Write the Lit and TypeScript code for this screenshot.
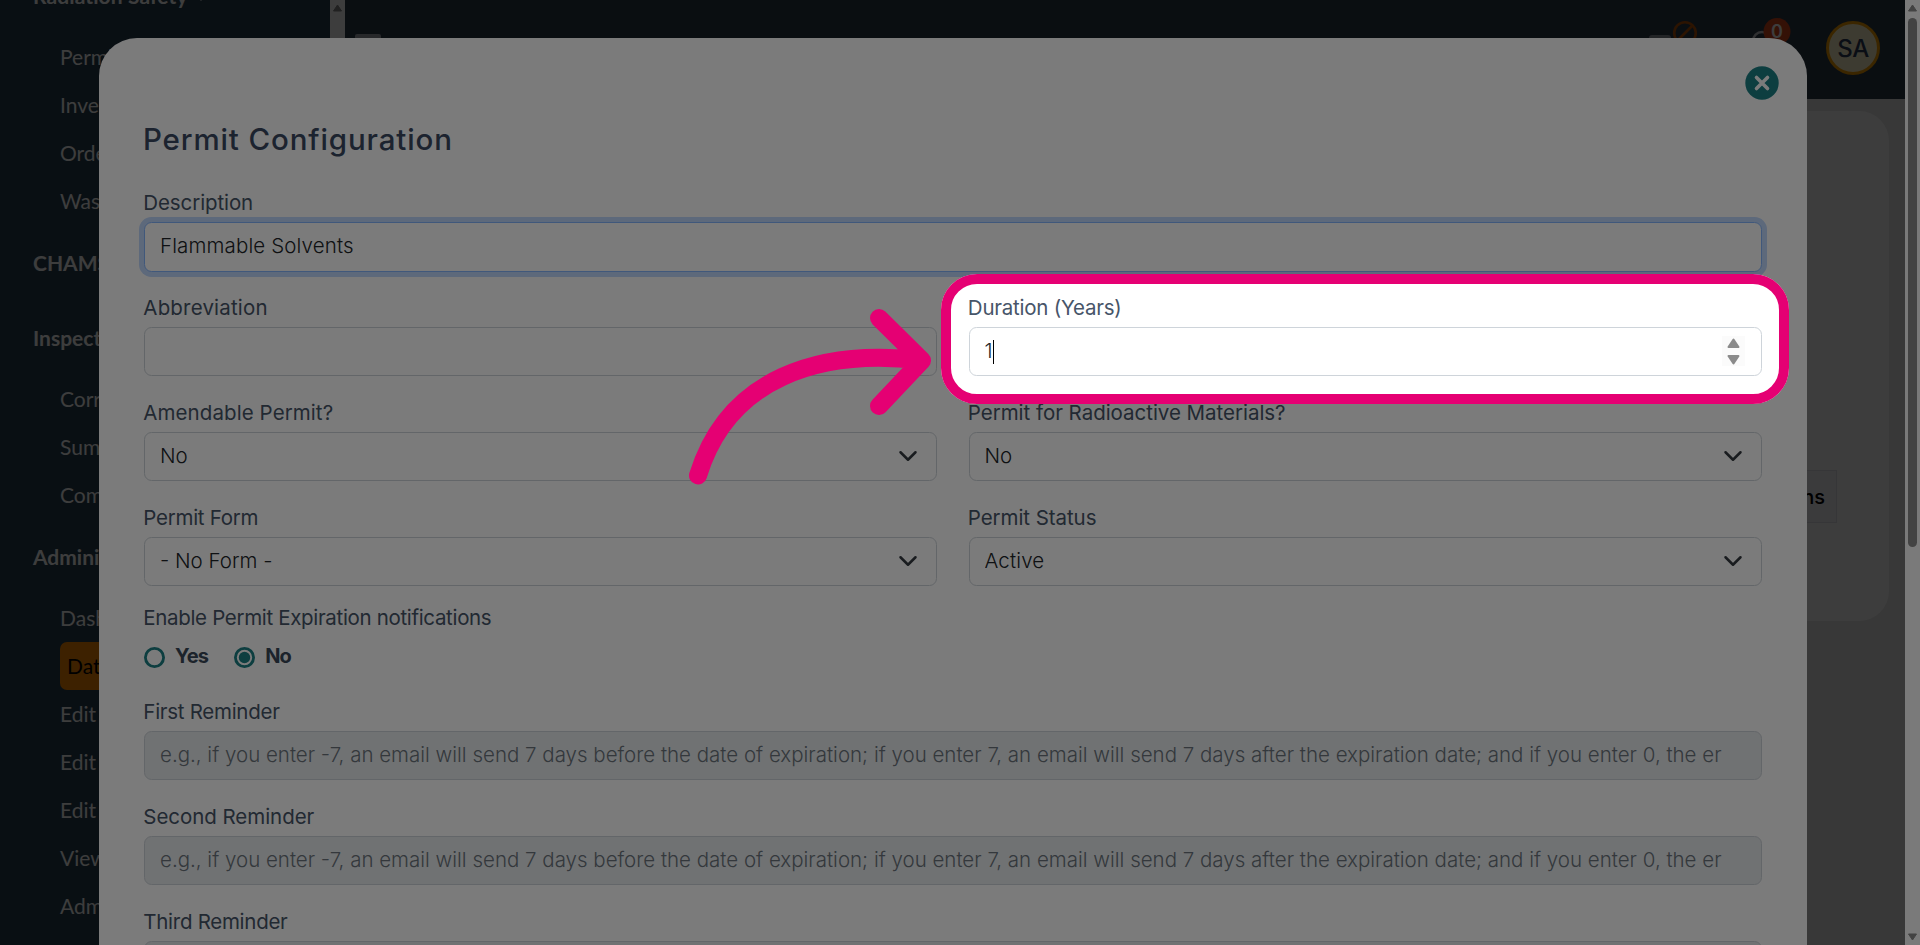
import { LitElement, html, css, svg } from "lit";
import { customElement, property } from "lit/decorators.js";
import { classMap } from "lit/directives/class-map.js";

const REMINDER_HINT =
  "e.g., if you enter -7, an email will send 7 days before the date of expiration; if you enter 7, an email will send 7 days after the expiration date; and if you enter 0, the er";

const chevron = html`<svg class="chevron" width="20" height="20" viewBox="0 0 16 16" fill="none" stroke="#343a40" stroke-width="2" stroke-linecap="round" stroke-linejoin="round"><path d="m2 5 6 6 6-6" /></svg>`;

const sections: { title: string; items: string[]; open?: boolean }[] = [
  { title: "Radiation Safety", items: ["Permits", "Inventory", "Orders", "Waste"], open: true },
  { title: "CHAMS", items: [] },
  { title: "Inspections", items: ["Corrections", "Summary", "Compliance"] },
  { title: "Administration", items: ["Dashboard", "Data", "Edit", "Edit", "Edit", "View", "Admin"] },
];

@customElement("side-nav")
export class SideNav extends LitElement {
  static styles = css`
    :host { display: block; width: 330px; height: 945px; overflow: hidden; background: #263f50; font: 21px/48px Lato, sans-serif; color: #fff; }
    .list { margin-top: -42px; display: flex; flex-direction: column; }
    .section { display: flex; flex-direction: column; }
    .title { margin: 14px 0 13px 33px; height: 48px; font-weight: 700; }
    .open { letter-spacing: 0.1px; }
    .caret { margin-left: 9px; vertical-align: 3px; }
    .item { margin-left: 60px; height: 48px; }
    .active { background: #ff8a00; color: #000; border-radius: 7px; padding-left: 7px; }
  `;
  render() {
    return html`<nav class="list">
      ${sections.map(
        (s) => html`<div class="section">
          <div class=${classMap({ title: true, open: !!s.open })}>${s.title}${s.open
            ? html`<svg class="caret" width="8" height="5" viewBox="0 0 8 5"><path d="M0 0h8L4 5Z" fill="#fff" /></svg>`
            : ""}</div>
          ${s.items.map((i) => html`<div class=${classMap({ item: true, active: i === "Data" })}>${i}</div>`)}
        </div>`
      )}
    </nav>`;
  }
}

@customElement("form-field")
export class FormField extends LitElement {
  @property() label = "";
  @property() value = "";
  @property() kind = "text";
  @property({ type: Boolean }) focused = false;
  @property({ type: Number }) tracking = 0;
  @property({ type: Number }) valueTracking = 0;
  static styles = css`
    :host { display: block; height: 105px; }
    .label { height: 21px; margin: 0 0 9px -0.7px; line-height: 21px; font-size: 20.5px; color: #475569; white-space: pre; }
    .box { box-sizing: border-box; height: 49px; border: 1px solid #ced4da; border-radius: 7.5px; padding: 0 18px 0 15px; display: flex; align-items: center; color: #212529; font-size: 20.5px; font-weight: 300; background: #fff; }
    .value { white-space: pre; overflow: hidden; padding-bottom: 2px; }
    .focused { height: 50px; border-color: #86b7fe; box-shadow: 0 0 0 5px #c2d9ff; }
    .focused .value { padding-bottom: 3px; }
    .disabled { background: #e9ecef; color: #6c757d; padding-right: 36px; }
    .chevron, .spin { margin-left: auto; flex: none; margin-bottom: 2px; }
    .spin { margin-right: -2px; }
    .caret { width: 1px; height: 24px; background: #000; }
  `;
  render() {
    return html`<div class="label" style="letter-spacing:${this.tracking}px">${this.label}</div>
      <div class=${classMap({ box: true, focused: this.focused, disabled: this.kind === "disabled" })}>
        <span class="value" style="letter-spacing:${this.valueTracking}px">${this.value}</span>
        ${this.kind === "select" ? chevron : ""}
        ${this.kind === "number"
          ? html`<span class="caret"></span>
              <svg class="spin" width="23" height="30" viewBox="0 0 23 30">
                <rect width="23" height="30" fill="#fbfbfb" />
                <path d="M11.5 3.5 16.5 11H6.500Z M11.500 27.500 16.500 20H6.500Z" fill="#8b8b8b" stroke="#8b8b8b" stroke-width="2" stroke-linejoin="round" />
              </svg>`
          : ""}
      </div>`;
  }
}

@customElement("permit-dialog")
export class PermitDialog extends LitElement {
  static styles = css`
    :host { display: block; box-sizing: border-box; width: 1708px; height: 907px; overflow: hidden; background: #fff; border-radius: 38px 38px 0 0; padding: 28px 45px 0; font-family: Inter, sans-serif; }
    .bar { display: flex; justify-content: flex-end; margin-right: -17px; height: 35px; }
    .heading { margin: 19px 0 34px -1px; height: 38px; line-height: 38px; font-size: 29.5px; font-weight: 500; letter-spacing: 0.87px; color: #3b4a63; white-space: nowrap; }
    .pair { display: grid; grid-template-columns: 793px 793.5px; gap: 0 31.5px; }
    .legend { height: 21px; margin: -5px 0 0 -0.7px; line-height: 21px; font-size: 20.5px; color: #475569; letter-spacing: -0.33px; }
    .radios { display: flex; height: 24px; margin: 17px 0 32px; gap: 26px; }
    .choice { display: flex; align-items: center; gap: 10px; font-size: 20px; font-weight: 700; letter-spacing: -0.8px; color: #3b4a5a; }
    .answer { padding-bottom: 3px; }
  `;
  render() {
    return html`
      <div class="bar">
        <svg width="34" height="34" viewBox="0 0 34 34"><circle cx="17" cy="17" r="16.700" fill="#1c8085" /><path d="m11.500 11.500 11 11m0-11-11 11" stroke="#fff" stroke-width="3.600" stroke-linecap="round" /></svg>
      </div>
      <div class="heading">Permit Configuration</div>
      <form-field label="Description" value="Flammable Solvents" focused .tracking=${-0.1} .valueTracking=${0.13}></form-field>
      <div class="pair">
        <form-field label="Abbreviation" .tracking=${0.18}></form-field>
        <form-field label="Duration (Years)" value="1" kind="number" .tracking=${-0.23}></form-field>
        <form-field label="Amendable Permit?" value="No" kind="select" .tracking=${0.08}></form-field>
        <form-field label="Permit for Radioactive Materials?" value="No" kind="select" .tracking=${-0.03}></form-field>
        <form-field label="Permit Form" value="- No Form -" kind="select" .tracking=${-0.27}></form-field>
        <form-field label="Permit Status" value="Active" kind="select" .tracking=${-0.07} .valueTracking=${0.15}></form-field>
      </div>
      <div class="legend">Enable Permit Expiration notifications</div>
      <div class="radios">
        ${["Yes", "No"].map(
          (v) => html`<span class="choice">
            <svg width="21" height="21" viewBox="0 0 21 21">
              <circle cx="10.500" cy="10.500" r="9.100" fill="none" stroke="#1c8085" stroke-width="2.800" />
              ${v === "No" ? svg`<circle cx="10.500" cy="10.500" r="5.700" fill="#1c8085" />` : ""}
            </svg><span class="answer">${v}</span></span>`
        )}
      </div>
      <form-field label="First Reminder" value=${REMINDER_HINT} kind="disabled" .tracking=${-0.28}></form-field>
      <form-field label="Second Reminder" value=${REMINDER_HINT} kind="disabled" .tracking=${-0.05}></form-field>
      <form-field label="Third Reminder" value=${REMINDER_HINT} kind="disabled" .tracking=${-0.28}></form-field>
    `;
  }
}

@customElement("app-root")
export class AppRoot extends LitElement {
  static styles = css`
    :host { display: block; position: relative; width: 1920px; height: 945px; overflow: hidden; font-family: Inter, sans-serif; }
    .page { display: flex; height: 945px; }
    .inner-track { width: 15px; background: #fcfcfc; display: flex; justify-content: center; padding-top: 4px; box-sizing: border-box; }
    .main { width: 1560px; background: #e9e9e9; }
    .top { height: 99px; background: #2c3a4b; display: flex; justify-content: flex-end; align-items: flex-start; box-sizing: border-box; padding: 17px 25px 0 10px; }
    .burger { width: 26px; height: 20px; margin: 17px auto 0 0; border-top: 4px solid #a4a8ae; border-radius: 2px; }
    .mail { margin-right: 54px; }
    .bell { margin-right: 35px; }
    .avatar { box-sizing: border-box; width: 54px; height: 54px; margin-top: 4px; border: 3px solid #f5a000; border-radius: 50%; background: #fff5cc; color: #2c3a5a; font: 500 24px/50px Inter, sans-serif; letter-spacing: -0.5px; text-align: center; }
    .card { box-sizing: border-box; height: 510px; margin: 12px 16px 0; border-radius: 30px; background: #fefefe; padding: 359px 52px 0; display: flex; justify-content: flex-end; align-items: flex-start; }
    .button { box-sizing: border-box; height: 53px; padding: 0 11px; border: 1px solid #e2e2ea; background: #f4f4f9; font-size: 20px; font-weight: 500; line-height: 53px; color: #000; }
    .track { width: 15px; background: #fcfcfc; box-sizing: border-box; padding: 4px 3px; display: flex; flex-direction: column; align-items: center; }
    .thumb { width: 9px; height: 529px; margin-top: 6px; border-radius: 5px; background: #8b8b8b; }
    .down { margin-top: auto; }
    .backdrop { position: absolute; left: 0; top: 0; width: 1905px; height: 945px; background: rgba(0, 0, 0, 0.5); }
    .dialog { position: absolute; left: 99px; top: 38px; }
    .spotlight { position: absolute; box-sizing: border-box; left: 941px; top: 274px; width: 848px; height: 130px; border: 10px solid #e50073; border-radius: 36px; box-shadow: 0 0 0 2000px rgba(0, 0, 0, 0.516); }
    .arrow { position: absolute; left: 680px; top: 300px; }
  `;
  render() {
    const tri = (cls: string, d: string) =>
      html`<svg class=${cls} width="9" height="8" viewBox="0 0 9 8"><path d=${d} fill="#8b8b8b" stroke="#8b8b8b" stroke-linejoin="round" /></svg>`;
    const up = "M4.5 1 8.5 7H.5Z";
    return html`
      <div class="page">
        <side-nav></side-nav>
        <div class="inner-track">${tri("up", up)}</div>
        <div class="main">
          <div class="top">
            <div class="burger"></div>
            <svg class="mail" width="48" height="40" viewBox="0 0 48 40"><rect x="0" y="18" width="22" height="22" rx="3" fill="#8f96a0" /><circle cx="36" cy="16" r="10.800" fill="#2c3a4b" stroke="#b85408" stroke-width="2.600" /><path d="m29 23 14-14" stroke="#b85408" stroke-width="2.600" /></svg>
            <svg class="bell" width="40" height="40" viewBox="0 0 40 40"><path d="M2 24a9 9 0 0 1 18 0v12H2Z" fill="none" stroke="#c5c7ca" stroke-width="2.500" /><circle cx="26" cy="14.500" r="13.500" fill="#d9481c" /><text x="26" y="20.500" text-anchor="middle" font-family="Inter" font-size="18" font-weight="600" fill="#fff">0</text></svg>
            <div class="avatar">SA</div>
          </div>
          <div class="card"><div class="button">Permissions</div></div>
        </div>
        <div class="track">${tri("up", up)}<div class="thumb"></div>${tri("down", "M4.5 7 8.5 1H.5Z")}</div>
      </div>
      <div class="backdrop"></div>
      <permit-dialog class="dialog"></permit-dialog>
      <div class="spotlight"></div>
      <svg class="arrow" width="260" height="200" viewBox="0 0 260 200" fill="none" stroke="#e50073" stroke-width="18" stroke-linecap="round" stroke-linejoin="round"><path d="M18 175.500C48 78 139 48 242 60.500M199 18l43 42.500-43 45.500" /></svg>
    `;
  }
}
